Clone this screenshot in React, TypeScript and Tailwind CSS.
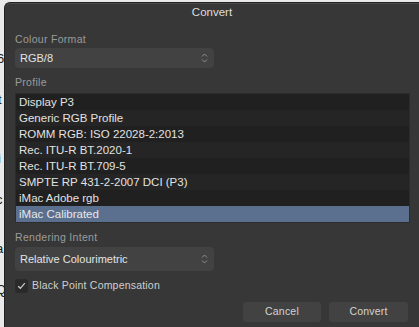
const profiles = [
  "Display P3",
  "Generic RGB Profile",
  "ROMM RGB: ISO 22028-2:2013",
  "Rec. ITU-R BT.2020-1",
  "Rec. ITU-R BT.709-5",
  "SMPTE RP 431-2-2007 DCI (P3)",
  "iMac Adobe rgb",
  "iMac Calibrated",
];

const Chevrons = () => (
  <svg width="7" height="12" viewBox="0 0 7 12" className="text-[#8e8e8e]">
    <path d="M1 4.5 L3.5 2 L6 4.5" fill="none" stroke="currentColor" strokeWidth="1" />
    <path d="M1 7.5 L3.5 10 L6 7.5" fill="none" stroke="currentColor" strokeWidth="1" />
  </svg>
);

const Select = ({ value, h }: { value: string; h: string }) => (
  <div className={`flex items-center justify-between w-[199px] ${h} rounded-[4px] bg-[#424242] pl-[5px] pr-[6px]`}>
    <span className="text-[11px] text-[#e2e2e2]">{value}</span>
    <Chevrons />
  </div>
);

export default function App() {
  return (
    <div className="flex w-[419px] h-[327px] bg-[#e9e9e9] overflow-hidden" style={{ fontFamily: "'Liberation Sans', Arial, sans-serif" }}>
      {/* document peeking out behind the dialog */}
      <div className="w-[4px] shrink-0 overflow-hidden text-[13px] text-[#222] leading-none pt-[52px] flex flex-col gap-[28px]">
        <span className="-ml-[3px]">6</span>
        <span className="-ml-[2px]">t</span>
        <span className="-ml-[2px] mt-[18px]">i</span>
        <span className="-ml-[4px]">c</span>
        <span className="-ml-[4px] mt-[8px]">a</span>
        <span className="-ml-[4px]">Q</span>
      </div>

      <div className="flex-1 flex flex-col mt-[2px] rounded-tl-[6px] border-l border-t border-[#222] bg-[#373737] shadow-[inset_0_1px_0_#4a4a4a]">
        <div className="h-[20px] flex items-center justify-center text-[11.5px] text-[#dedede]">Convert</div>

        <div className="flex flex-col pl-[10px] pr-[9px] pt-[8px]">
          <div className="text-[10.5px] text-[#9b9b9b] h-[16px] leading-[16px] tracking-[0.3px]">Colour Format</div>
          <div className="mt-[1px]"><Select value="RGB/8" h="h-[20px]" /></div>

          <div className="text-[10.5px] text-[#9b9b9b] h-[16px] leading-[16px] mt-[6px] tracking-[0.3px]">Profile</div>
          <div className="mt-[3px] w-[395px] bg-[#1e1e1e] border border-[#2c2c2c] flex flex-col">
            {profiles.map((p, i) => (
              <div
                key={p}
                className={`h-[16px] leading-[16px] pl-[3px] text-[11.5px] ${
                  i === 7
                    ? "bg-[#5b6f8f] text-[#e8e8e8]"
                    : i % 2 === 0
                    ? "bg-[#202020] text-[#e2e2e2]"
                    : "bg-[#252525] text-[#e2e2e2]"
                }`}
              >
                {p}
              </div>
            ))}
          </div>

          <div className="text-[10.5px] text-[#9b9b9b] h-[16px] leading-[16px] mt-[6px] tracking-[0.3px]">Rendering Intent</div>
          <div className="mt-[2px]"><Select value="Relative Colourimetric" h="h-[24px]" /></div>

          <div className="flex items-center gap-[4px] mt-[8px] h-[14px]">
            <div className="w-[13px] h-[14px] rounded-[3px] bg-[#2a2a2a] flex items-center justify-center">
              <svg width="9" height="8" viewBox="0 0 9 8">
                <path d="M1.2 4.2 L3.4 6.3 L7.8 1.2" fill="none" stroke="#c8c8c8" strokeWidth="1.3" />
              </svg>
            </div>
            <span className="text-[10.5px] text-[#cfcfcf] tracking-[0.2px]">Black Point Compensation</span>
          </div>

          <div className="flex justify-end gap-[8px] mt-[9px] pr-[2px]">
            <div className="w-[78px] h-[20px] rounded-[3px] bg-[#424242] flex items-center justify-center text-[10.5px] text-[#d4d4d4] tracking-[0.2px]">Cancel</div>
            <div className="w-[79px] h-[20px] rounded-[3px] bg-[#424242] flex items-center justify-center text-[10.5px] text-[#d4d4d4] tracking-[0.2px]">Convert</div>
          </div>
        </div>
      </div>
    </div>
  );
}
